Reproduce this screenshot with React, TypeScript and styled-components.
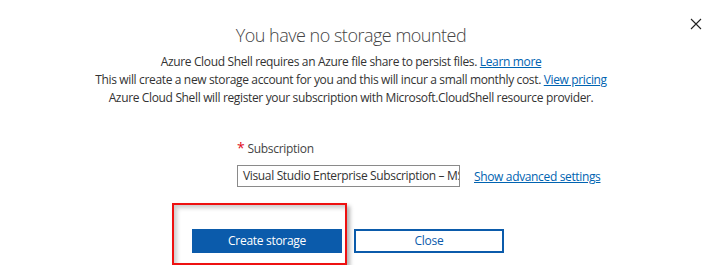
import React from "react";
import styled, { createGlobalStyle } from "styled-components";

const Global = createGlobalStyle`
  html, body { margin: 0; padding: 0; background: #fff; }
  body { font-family: "Open Sans", "Noto Sans", "Liberation Sans", sans-serif; color: #333; }
`;

const Dialog = styled.div`
  position: relative;
  width: 702px;
  height: 265px;
  overflow: hidden;
  display: flex;
  flex-direction: column;
  background: #fff;
`;

const CloseX = styled.button`
  position: absolute;
  top: 18px;
  right: 0px;
  width: 12px;
  height: 12px;
  padding: 0;
  border: none;
  background: transparent;
  display: flex;
  align-items: center;
  justify-content: center;
`;

const Title = styled.h1`
  margin: 22px 0 0 0;
  text-align: center;
  font-weight: 300;
  font-size: 18px;
  letter-spacing: -0.5px;
  line-height: 26px;
  color: #444;
`;

const Description = styled.div`
  margin-top: 5px;
  text-align: center;
  font-size: 12px;
  letter-spacing: -0.35px;
  line-height: 18px;
  color: #333;
`;

const Line = styled.div`
  white-space: nowrap;
`;

const Link = styled.a`
  color: #0063b1;
  text-decoration: underline;
  cursor: pointer;
`;

const Form = styled.div`
  margin-top: 34px;
  padding-left: 237px;
  display: flex;
  flex-direction: column;
  gap: 9px;
`;

const Label = styled.div`
  font-size: 12px;
  letter-spacing: -0.3px;
  line-height: 14px;
  color: #444;
  display: flex;
  align-items: baseline;
  gap: 3px;
`;

const Star = styled.span`
  color: #e00b1c;
  font-size: 14px;
`;

const FieldRow = styled.div`
  display: flex;
  align-items: center;
  gap: 14px;
`;

const SelectBox = styled.div`
  box-sizing: border-box;
  width: 223px;
  height: 22px;
  border: 1px solid #8a8a8a;
  padding: 0 5px;
  font-size: 12px;
  letter-spacing: -0.35px;
  line-height: 20px;
  color: #333;
  white-space: nowrap;
  overflow: hidden;
  text-overflow: clip;
`;

const AdvLink = styled(Link)`
  font-size: 12px;
  letter-spacing: -0.35px;
`;

const Actions = styled.div`
  margin-top: 16px;
  padding-left: 172px;
  display: flex;
  align-items: flex-start;
  gap: 7px;
`;

const Highlight = styled.div`
  box-sizing: border-box;
  border: 2px solid #ee1111;
  padding: 23px 3px 10px 18px;
  box-shadow: 3px 3px 4px rgba(0, 0, 0, 0.3), inset 3px 3px 4px rgba(0, 0, 0, 0.2);
`;

const Button = styled.button<{ $primary?: boolean }>`
  box-sizing: border-box;
  width: 150px;
  height: 24px;
  font-family: inherit;
  font-size: 12px;
  letter-spacing: -0.3px;
  cursor: pointer;
  background: ${(p) => (p.$primary ? "#0b5bab" : "#fff")};
  color: ${(p) => (p.$primary ? "#fff" : "#0b5bab")};
  border: ${(p) => (p.$primary ? "none" : "2px solid #0b5bab")};
`;

const CloseWrap = styled.div`
  margin-top: 25px;
`;

export default function App() {
  return (
    <>
      <Global />
      <Dialog>
        <CloseX aria-label="Close">
          <svg width="12" height="12" viewBox="0 0 12 12">
            <path d="M1 1 L11 11 M11 1 L1 11" stroke="#222" strokeWidth="1.1" fill="none" />
          </svg>
        </CloseX>
        <Title>You have no storage mounted</Title>
        <Description>
          <Line>
            Azure Cloud Shell requires an Azure file share to persist files. <Link>Learn more</Link>
          </Line>
          <Line>
            This will create a new storage account for you and this will incur a small monthly cost.{" "}
            <Link>View pricing</Link>
          </Line>
          <Line>Azure Cloud Shell will register your subscription with Microsoft.CloudShell resource provider.</Line>
        </Description>
        <Form>
          <Label>
            <Star>*</Star>
            <span>Subscription</span>
          </Label>
          <FieldRow>
            <SelectBox>Visual Studio Enterprise Subscription – MSDN</SelectBox>
            <AdvLink>Show advanced settings</AdvLink>
          </FieldRow>
        </Form>
        <Actions>
          <Highlight>
            <Button $primary>Create storage</Button>
          </Highlight>
          <CloseWrap>
            <Button>Close</Button>
          </CloseWrap>
        </Actions>
      </Dialog>
    </>
  );
}
